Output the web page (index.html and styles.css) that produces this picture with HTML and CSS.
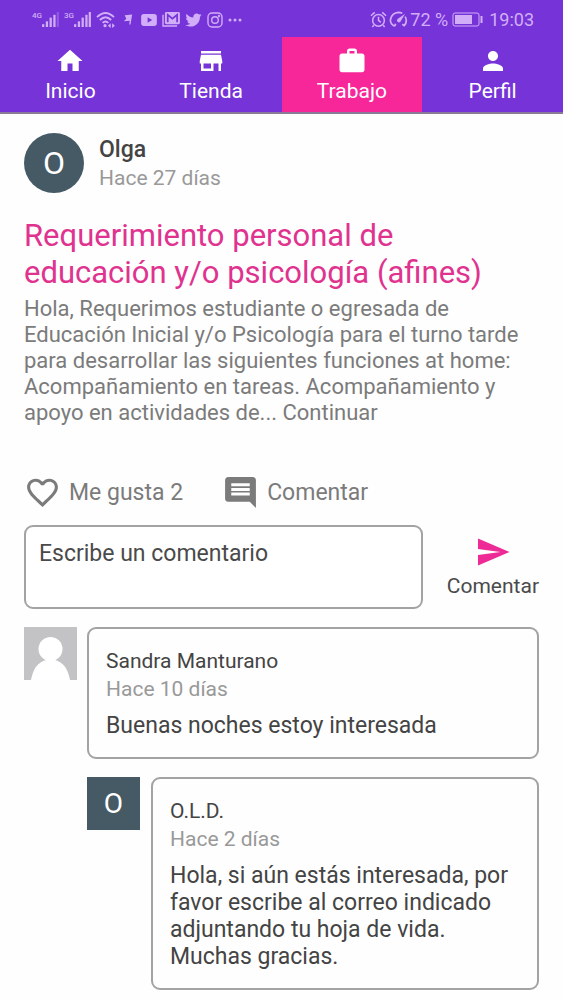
FILE: index.html
```html
<!DOCTYPE html>
<html lang="es">
<head>
<meta charset="utf-8">
<meta name="viewport" content="width=device-width, initial-scale=1">
<title>Trabajo</title>
<link rel="stylesheet" href="styles.css">
</head>
<body>
<header class="top">
  <div class="status">
    <div class="status-group">
      <span class="signal"><span class="net">4G</span>
        <svg width="17" height="15" viewBox="0 0 18 16" fill="currentColor"><rect x="0" y="13" width="2.400" height="3"/><rect x="4" y="10" width="2.400" height="6"/><rect x="8" y="6" width="2.400" height="10"/><rect x="12" y="3" width="2.400" height="13"/><rect x="15.600" y="0" width="2.400" height="16" opacity=".3"/></svg></span>
      <span class="signal"><span class="net">3G</span>
        <svg width="17" height="15" viewBox="0 0 18 16" fill="currentColor"><rect x="0" y="13" width="2.400" height="3"/><rect x="4" y="10" width="2.400" height="6"/><rect x="8" y="6" width="2.400" height="10"/><rect x="12" y="3" width="2.400" height="13"/><rect x="15.600" y="0" width="2.400" height="16"/></svg></span>
      <svg width="19" height="17" viewBox="0 0 20 18" fill="none" stroke="currentColor" stroke-width="2"><path d="M1 6.500Q10-2.500 19 6.500M4 9.500Q10 3.500 16 9.500M7 12.500Q10 9.500 13 12.500"/><circle cx="9.500" cy="15.500" r="1.700" fill="currentColor" stroke="none"/><path d="M12.500 15.500l3-2.500v5zM20 15.500l-3-2.500v5z" fill="currentColor" stroke="none"/></svg>
      <svg class="flag" width="10" height="13" viewBox="0 0 12 14" fill="currentColor"><path d="M2 2l9-1-2 12-1.500 0 .5-4.500-7 .5 3-3z"/></svg>
      <svg width="16" height="12" viewBox="0 0 17 13" fill="currentColor"><path fill-rule="evenodd" d="M3 0h11q3 0 3 3v7q0 3-3 3H3q-3 0-3-3V3q0-3 3-3zm4 3.500v6l5-3z"/></svg>
      <svg width="18" height="15" viewBox="0 0 19 16" fill="none" stroke="currentColor"><path d="M1 3v12h15" stroke-width="1.500"/><rect x="3" y="0" width="16" height="13" rx="1.500" fill="currentColor" stroke="none"/><path d="M6 11V3l5 4 5-4v8" stroke="#7533d8" stroke-width="1.800"/></svg>
      <svg width="17" height="16" viewBox="1 3 22 19" fill="currentColor"><path d="M22.460 6c-.77.350-1.600.580-2.460.690.880-.530 1.560-1.370 1.880-2.380-.830.500-1.750.850-2.720 1.050C18.370 4.500 17.260 4 16 4c-2.350 0-4.270 1.920-4.270 4.290 0 .340.040.670.110.980C8.280 9.090 5.110 7.380 3 4.790c-.370.630-.580 1.370-.580 2.150 0 1.490.750 2.810 1.910 3.560-.710 0-1.370-.200-1.950-.500v.030c0 2.080 1.480 3.820 3.440 4.210a4.220 4.220 0 0 1-1.930.070 4.280 4.280 0 0 0 4 2.980 8.521 8.521 0 0 1-5.330 1.840c-.340 0-.680-.020-1.020-.060C3.440 20.290 5.700 21 8.120 21 16 21 20.330 14.460 20.330 8.790c0-.190 0-.370-.010-.560.840-.600 1.560-1.360 2.140-2.230z"/></svg>
      <svg width="16" height="16" viewBox="0 0 16 16" fill="none" stroke="currentColor" stroke-width="1.400"><rect x="1" y="1" width="14" height="14" rx="4"/><circle cx="8" cy="8" r="3.300"/><circle cx="12" cy="4" r=".5"/></svg>
      <svg width="14" height="4" viewBox="0 0 14 4" fill="currentColor"><circle cx="2" cy="2" r="1.500"/><circle cx="7" cy="2" r="1.500"/><circle cx="12" cy="2" r="1.500"/></svg>
    </div>
    <div class="status-group right">
      <svg width="17" height="17" viewBox="0 0 18 18" fill="none" stroke="currentColor" stroke-width="1.600"><circle cx="9" cy="10" r="6.200"/><path d="M9 6v4l2.500 2M1 5l4-3.500M17 5l-4-3.500M4 15l-1.500 2M14 15l1.500 2"/></svg>
      <svg width="19" height="17" viewBox="0 0 20 18" fill="none" stroke="currentColor" stroke-width="1.800"><path d="M6 16Q1 14 1.500 9 3 2 10 1.500q2 0 4 1M17 6q3 5-1 9.500l-2-1.500M6 16l1-2.500"/><path d="M17 3l-5 8.500q-1.500 1.500-3 0t0-3z" fill="currentColor" stroke="none"/></svg>
      <span>72 %</span>
      <svg class="battery" width="31" height="15" viewBox="0 0 31 15" fill="none" stroke="currentColor"><rect x="1" y="1" width="26" height="13" rx="2"/><rect x="3" y="3" width="17" height="9" fill="currentColor" stroke="none"/><path d="M29.500 4v7" stroke-width="2"/></svg>
      <time>19:03</time>
    </div>
  </div>
  <nav class="tabs">
    <a href="#inicio" class="tab"><svg viewBox="0 0 24 24"><path d="M10 20v-6h4v6h5v-8h3L12 3 2 12h3v8z"/></svg>Inicio</a>
    <a href="#tienda" class="tab"><svg viewBox="0 0 24 24"><path d="M20 4H4v2h16V4zm1 10v-2l-1-5H4l-1 5v2h1v6h10v-6h4v6h2v-6h1zm-9 4H6v-4h6v4z"/></svg>Tienda</a>
    <a href="#trabajo" class="tab active" aria-current="page"><svg viewBox="0 0 24 24"><path d="M20 6h-4V4c0-1.110-.890-2-2-2h-4c-1.110 0-2 .890-2 2v2H4c-1.110 0-2 .890-2 2v11c0 1.110.890 2 2 2h16c1.110 0 2-.890 2-2V8c0-1.110-.890-2-2-2zm-6 0h-4V4h4v2z"/></svg>Trabajo</a>
    <a href="#perfil" class="tab"><svg viewBox="0 0 24 24"><path d="M12 12c2.210 0 4-1.790 4-4s-1.790-4-4-4-4 1.790-4 4 1.790 4 4 4zm0 2c-2.670 0-8 1.340-8 4v2h16v-2c0-2.660-5.330-4-8-4z"/></svg>Perfil</a>
  </nav>
</header>
<main class="post">
  <div class="author">
    <span class="avatar round">O</span>
    <div class="author-text"><span class="author-name">Olga</span><span class="date">Hace 27 días</span></div>
  </div>
  <h1 class="title">Requerimiento personal de educación y/o psicología (afines)</h1>
  <p class="body">Hola, Requerimos estudiante o egresada de Educación Inicial y/o Psicología para el turno tarde para desarrollar las siguientes funciones at home: Acompañamiento en tareas. Acompañamiento y apoyo en actividades de... <a class="more" href="#continuar">Continuar</a></p>
  <div class="actions">
    <button type="button" class="action"><svg viewBox="0 0 24 24"><path d="M16.500 3c-1.740 0-3.410.810-4.500 2.090C10.910 3.810 9.240 3 7.500 3 4.420 3 2 5.420 2 8.500c0 3.780 3.400 6.860 8.550 11.540L12 21.350l1.450-1.320C18.600 15.360 22 12.280 22 8.500 22 5.420 19.580 3 16.500 3zm-4.400 15.550l-.1.100-.1-.1C7.140 14.240 4 11.390 4 8.500 4 6.500 5.500 5 7.500 5c1.540 0 3.040.990 3.570 2.360h1.870C13.460 5.990 14.960 5 16.500 5c2 0 3.500 1.500 3.500 3.500 0 2.890-3.140 5.740-7.900 10.050z"/></svg>Me gusta 2</button>
    <button type="button" class="action"><svg viewBox="0 0 24 24"><path d="M21.990 4c0-1.100-.890-2-1.990-2H4c-1.100 0-2 .900-2 2v12c0 1.100.900 2 2 2h14l4 4-.010-18zM18 14H6v-2h12v2zm0-3H6V9h12v2zm0-3H6V6h12v2z"/></svg>Comentar</button>
  </div>
  <form class="compose">
    <textarea class="field" aria-label="Comentario" placeholder="Escribe un comentario"></textarea>
    <button type="button" class="send"><svg viewBox="0 0 24 24"><path d="M2.010 21L23 12 2.010 3 2 10l15 2-15 2z"/></svg>Comentar</button>
  </form>
  <section class="comments">
    <article class="comment">
      <svg class="avatar" viewBox="0 0 53 53" role="img" aria-label="Sandra Manturano"><rect width="53" height="53" fill="#c3c3c5"/><circle cx="26.500" cy="22" r="12" fill="#fff"/><path d="M7 53q3-17 15-20h9q12 3 15 20z" fill="#fff"/></svg>
      <div class="card"><span class="name">Sandra Manturano</span><span class="date">Hace 10 días</span><p class="message">Buenas noches estoy interesada</p></div>
    </article>
    <article class="comment reply">
      <span class="avatar">O</span>
      <div class="card"><span class="name">O.L.D.</span><span class="date">Hace 2 días</span><p class="message">Hola, si aún estás interesada, por favor escribe al correo indicado adjuntando tu hoja de vida. Muchas gracias.</p></div>
    </article>
  </section>
</main>
</body>
</html>
```
FILE: styles.css
```css
* { box-sizing: border-box; }
body { margin: 0; background: #fefefe; color: #444; font-family: Roboto, sans-serif; font-size: 22px; }
a { color: inherit; text-decoration: none; }
button { border: 0; padding: 0; background: none; font: inherit; cursor: pointer; }
svg { display: block; flex: none; fill: currentColor; }
svg[fill="none"] { fill: none; }

.top { background: #7533d8; border-bottom: 2px solid #8a7a98; color: #fff; }
.status { display: flex; justify-content: space-between; align-items: center; height: 37px; padding: 2px 29px 0 32px; color: #d3aef8; font-size: 18px; }
.status-group { display: flex; align-items: center; gap: 5px; }
.status-group.right { gap: 2px; }
.signal { display: flex; align-items: flex-end; }
.net { align-self: flex-start; font-size: 8px; line-height: 8px; font-weight: 500; }
.flag { margin: 0 3px; }
.battery { margin: 0 4px 0 2px; }

.tabs { display: grid; grid-template-columns: repeat(4, 1fr); }
.tab { display: flex; flex-direction: column; align-items: center; gap: 3px; padding: 9px 0; font-size: 21px; line-height: 24px; }
.tab svg { width: 30px; height: 30px; }
.tab.active { background: #f72699; }

.post { padding: 19px 24px 10px; }
.author { display: flex; gap: 15px; }
.avatar { display: flex; flex: none; align-items: center; justify-content: center; width: 53px; height: 53px; background: #455a64; color: #fff; font-size: 28px; }
.avatar.round { width: 60px; height: 60px; border-radius: 50%; font-size: 32px; }
.author-text { display: flex; flex-direction: column; padding-top: 2px; line-height: 29px; }
.author-name { font-size: 23px; font-weight: 500; }
.date { color: #999; font-size: 21px; }
.title { margin: 24px 0 5px; color: #e0328f; font-size: 31px; line-height: 37px; font-weight: 400; }
.body { margin: 0; color: #7b7b7b; font-size: 22px; line-height: 26px; }
.more { display: inline-block; }

.actions { display: flex; gap: 39px; margin-top: 48px; }
.action { display: flex; align-items: center; gap: 8px; color: #7b7b7b; font-size: 23px; }
.action svg { width: 37px; height: 37px; }

.compose { display: flex; gap: 24px; margin-top: 14px; }
.field { flex: 1; min-width: 0; height: 84px; padding: 13px; border: 2px solid #a3a3a3; border-radius: 9px; background: #fff; color: #444; font: 23px/28px Roboto, sans-serif; resize: none; }
.field::placeholder { color: #4a4a4a; opacity: 1; }
.send { display: flex; flex-direction: column; align-items: center; gap: 4px; padding-top: 9px; color: #4a4a4a; font-size: 21px; line-height: 24px; }
.send svg { width: 36px; height: 36px; color: #ee2a97; }

.comments { display: grid; gap: 18px; margin-top: 18px; }
.comment { display: flex; align-items: flex-start; gap: 10px; }
.reply { margin-left: 63px; gap: 11px; }
.card { display: flex; flex: 1; flex-direction: column; min-width: 0; padding: 18px 17px; border: 2px solid #a3a3a3; border-radius: 9px; line-height: 28px; }
.name { font-size: 21px; }
.message { margin: 9px 0 0; font-size: 23px; line-height: 27px; }
```
